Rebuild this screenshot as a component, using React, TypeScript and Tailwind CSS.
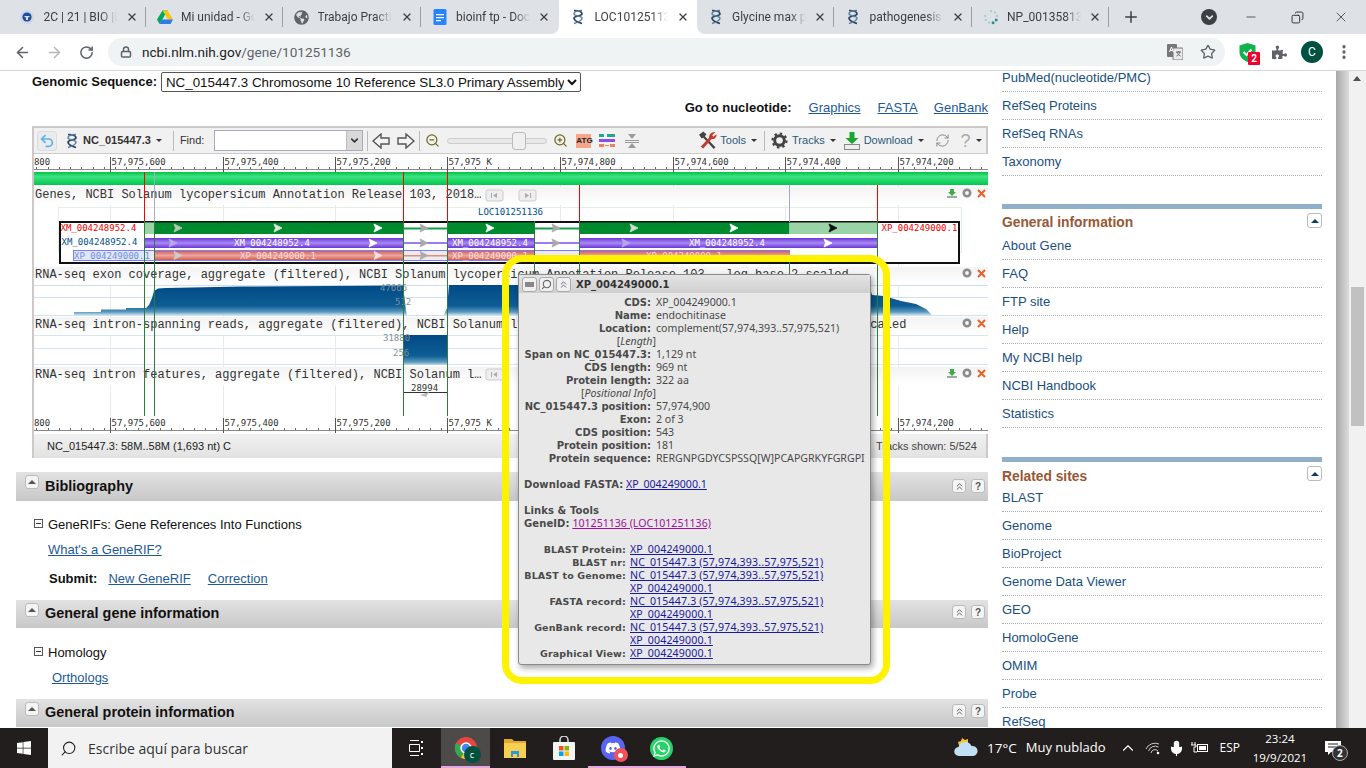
import {
  ArrowLeft,
  ArrowRight,
  ChevronDown,
  ChevronUp,
  ChevronsUp,
  Copy,
  EllipsisVertical,
  Lock,
  Mic,
  Minus,
  Plus,
  RefreshCw,
  RotateCw,
  Search,
  Star,
  Undo2,
  X,
  ZoomIn,
  ZoomOut,
} from "lucide-react";
import { FaDiscord, FaGlobeAmericas, FaPuzzlePiece, FaWhatsapp, FaWindows } from "react-icons/fa";
import type { ReactNode } from "react";

function Helix({ size = 16 }: { size?: number }) {
  return (
    <svg width={size} height={size} viewBox="0 0 16 16" fill="none" className="shrink-0">
      <path d="M4 1.5c5 0 8 1.5 8 3.5s-8 2-8 4 3 4 8 5.5" stroke="#26415c" strokeWidth="1.7" />
      <path d="M12 1.5C7 1.5 4 3 4 5s8 2 8 4-3 4-8 5.5" stroke="#5b7f9c" strokeWidth="1.4" />
    </svg>
  );
}

function DriveIcon() {
  return (
    <svg width="16" height="16" viewBox="0 0 16 16" className="shrink-0">
      <path d="M5.5 1.5h5L5 11 2.5 15 0 10.5z" fill="#00a85d" />
      <path d="M5.5 1.5h5l5.5 9h-5z" fill="#ffc107" />
      <path d="M5 10.5h11L13.5 15h-11z" fill="#2f7ae5" />
    </svg>
  );
}

function DocsIcon() {
  return (
    <svg width="16" height="16" viewBox="0 0 16 16" className="shrink-0">
      <rect x="1.5" width="13" height="16" rx="1.5" fill="#2684fc" />
      <path d="M4 5h8v1.3H4zM4 8h8v1.3H4zM4 11h5v1.3H4z" fill="#fff" />
    </svg>
  );
}

function RingIcon() {
  const dots = [0, 40, 80, 120, 160, 200, 240, 280];
  return (
    <svg width="16" height="16" viewBox="0 0 16 16" className="shrink-0">
      {dots.map((a) => (
        <circle
          key={a}
          cx={8 + 6 * Math.sin((a * Math.PI) / 180)}
          cy={8 - 6 * Math.cos((a * Math.PI) / 180)}
          r={a > 100 && a < 200 ? 1.5 : 0.9}
          fill={a > 100 && a < 200 ? "#2e8f8f" : "#79c9d4"}
        />
      ))}
    </svg>
  );
}

function UniBadge() {
  return (
    <svg width="16" height="16" viewBox="0 0 16 16" className="shrink-0">
      <circle cx="8" cy="8" r="7" fill="#cfd6ea" />
      <circle cx="8" cy="8" r="4.6" fill="#1f4e9c" />
      <path d="M5.5 7h5v1.2h-5zM7 8.2h2V11H7z" fill="#dbe4f5" />
    </svg>
  );
}

function Tab({ icon, title, active, sep = true }: { icon: ReactNode; title: string; active?: boolean; sep?: boolean }) {
  return (
    <div className={`relative flex h-[34px] w-[137.5px] shrink-0 items-center gap-[8.5px] pl-[11px] pr-[8px] ${active ? "rounded-t-[8px] bg-white" : ""}`}>
      {icon}
      <span className="flex-1 overflow-hidden whitespace-nowrap text-[12px] text-[#3c4043] [mask-image:linear-gradient(to_right,black_78%,transparent)]">
        {title}
      </span>
      <X size={12} strokeWidth={2.6} className="shrink-0 text-[#3c4043]" />
      {sep && <div className="absolute right-0 top-[7px] h-[20px] w-px bg-[#9aa0a6]" />}
    </div>
  );
}

function ChromeBar() {
  return (
    <div className="font-['Roboto',sans-serif]">
      <div className="flex h-[34px] bg-white">
        <div className="flex w-[559px] rounded-br-[8px] bg-[#dee1e6] pl-[8px]">
          <Tab icon={<UniBadge />} title="2C | 21 | BIO |BIOINF" />
          <Tab icon={<DriveIcon />} title="Mi unidad - Google Drive" />
          <Tab icon={<FaGlobeAmericas size={15} className="shrink-0 text-[#5f6368]" />} title="Trabajo Practico" />
          <Tab icon={<DocsIcon />} title="bioinf tp - Documentos" sep={false} />
        </div>
        <Tab icon={<Helix />} title="LOC101251136 endochitinase" active sep={false} />
        <div className="flex flex-1 items-center rounded-bl-[8px] bg-[#dee1e6]">
          <Tab icon={<Helix />} title="Glycine max pathogen" />
          <Tab icon={<Helix />} title="pathogenesis-related" />
          <Tab icon={<RingIcon />} title="NP_001358132.1" />
          <Plus size={18} strokeWidth={2} className="ml-[13px] text-[#3c4043]" />
          <div className="ml-[61px] flex h-[16px] w-[16px] items-center justify-center rounded-full bg-[#3c4043]">
            <ChevronDown size={11} strokeWidth={4} className="text-[#dee1e6]" />
          </div>
          <Minus size={14} strokeWidth={1.2} className="ml-[27px] text-[#202124]" />
          <Copy size={13} strokeWidth={1.6} className="ml-[33px] -scale-x-100 text-[#202124]" />
          <X size={16} strokeWidth={1.1} className="ml-[29px] text-[#202124]" />
        </div>
      </div>
      <div className="flex h-[37px] items-center border-b border-[#d3d5d8] bg-white">
        <ArrowLeft size={17} strokeWidth={2.2} className="ml-[14px] text-[#5f6368]" />
        <ArrowRight size={17} strokeWidth={2.2} className="ml-[15px] text-[#b4b7ba]" />
        <RotateCw size={15} strokeWidth={2.4} className="ml-[16px] text-[#5f6368]" />
        <div className="ml-[14px] flex h-[28px] w-[1117px] items-center rounded-full bg-[#f0f3f4]">
          <Lock size={12} strokeWidth={3} className="ml-[12px] text-[#5f6368]" />
          <span className="ml-[10px] text-[13.6px] text-[#202124]">
            ncbi.nlm.nih.gov<span className="text-[#5f6368]">/gene/101251136</span>
          </span>
          <svg width="16" height="16" viewBox="0 0 16 16" className="ml-auto">
            <rect x="0" y="0" width="10" height="13" rx="1" fill="#777" />
            <rect x="6" y="4" width="10" height="12" rx="1" fill="#e8eaed" stroke="#777" />
            <path d="M2.5 8l2-5 2 5M3.2 6.5h2.6" stroke="#fff" fill="none" />
            <path d="M9 8h5M11.5 7v1M10 8c.5 2 2 3.5 3.5 4M13 8c-.5 2-2 3.5-3.5 4" stroke="#666" fill="none" />
          </svg>
          <Star size={16} strokeWidth={2} className="ml-[17px] mr-[9px] text-[#5f6368]" />
        </div>
        <div className="relative ml-[14px]">
          <svg width="17" height="19" viewBox="0 0 17 19">
            <path d="M8.5 0l8 2.5v6.5c0 5-3.5 8-8 10-4.5-2-8-5-8-10V2.5z" fill="#10b34b" />
            <path d="M4.5 9l3 3 5-5.5" stroke="#fff" strokeWidth="2" fill="none" />
          </svg>
          <span className="absolute left-[9px] top-[9px] flex h-[13px] w-[12px] items-center justify-center rounded-[1px] bg-[#f0002c] text-[10px] font-bold text-white">
            2
          </span>
        </div>
        <FaPuzzlePiece size={15} className="ml-[16px] text-[#5f6368]" />
        <div className="ml-[14px] flex h-[22px] w-[22px] items-center justify-center rounded-full bg-[#00513f] text-[12px] text-white">C</div>
        <EllipsisVertical size={18} strokeWidth={2.4} className="ml-[12px] text-[#5f6368]" />
      </div>
    </div>
  );
}

const ticks: [number, string][] = [
  [-6, "57,975,800"],
  [109.5, "57,975,600"],
  [222.5, "57,975,400"],
  [334.5, "57,975,200"],
  [446.5, "57,975 K"],
  [559.5, "57,974,800"],
  [672.5, "57,974,600"],
  [784.5, "57,974,400"],
  [897.5, "57,974,200"],
];
const minorTicks = Array.from({ length: 86 }, (_, i) => Math.round(35.25 + i * 11.25) + 0.5);

function Ruler({ base }: { base: number }) {
  return (
    <g>
      <line x1="33" x2="987" y1={base + 0.5} y2={base + 0.5} stroke="#8a8a8a" />
      {minorTicks.map((x) => (
        <line key={x} x1={x} x2={x} y1={base - 2} y2={base} stroke="#666" />
      ))}
      {ticks.map(([x, label]) => (
        <g key={x}>
          <line x1={x} x2={x} y1={base - 12} y2={base + 3} stroke="#555" />
          <text x={x + 1} y={base - 4} className="fill-[#333] font-['DejaVu_Sans_Mono',monospace] text-[9px]">
            {label}
          </text>
        </g>
      ))}
    </g>
  );
}

function Flag({ x, y, c }: { x: number; y: number; c: string }) {
  return <polygon points={`${x - 4},${y - 4} ${x + 4},${y} ${x - 4},${y + 4} ${x - 2.5},${y}`} fill={c} stroke={c} strokeWidth="0.8" />;
}

function TrackHead({ y, text }: { y: number; text: string }) {
  return (
    <g>
      <rect x="33" y={y} width="954" height="18" fill="url(#band)" />
      <text x="34" y={y + 11} className="fill-[#333] font-['Liberation_Mono',monospace] text-[12px]">
        {text}
      </text>
    </g>
  );
}

function TrackTools({ y, dl = true }: { y: number; dl?: boolean }) {
  return (
    <g>
      {dl && (
        <g>
          <path d={`M949 ${y - 4}h4v3h2l-4 4-4-4h2z`} fill="#3fae49" />
          <rect x="946" y={y + 3} width="10" height="2" fill="#9aa" />
        </g>
      )}
      <circle cx="966" cy={y} r="3.2" fill="none" stroke="#8b8b8b" strokeWidth="2.6" />
      <path d={`M977 ${y - 3}l7 7M984 ${y - 3}l-7 7`} stroke="#e8632a" strokeWidth="2" />
    </g>
  );
}

function PageBtn({ x, y, flip }: { x: number; y: number; flip?: boolean }) {
  return (
    <g>
      <rect x={x} y={y} width="17" height="11" rx="2" fill="#eee" stroke="#ccc" />
      <path
        d={flip ? `M${x + 6} ${y + 3}l4 2.5-4 2.5zM${x + 11} ${y + 3}h1v5h-1z` : `M${x + 11} ${y + 3}l-4 2.5 4 2.5zM${x + 5} ${y + 3}h1v5h-1z`}
        fill="#aaa"
      />
    </g>
  );
}

function TrackCanvas() {
  const mono = "font-['DejaVu_Sans_Mono',monospace] text-[9px]";
  const vertical = [143.5, 153.5, 402.5, 446.5, 533.5, 578.5, 876.5];
  const redLines = [143.5, 402.5, 446.5, 578.5, 876.5];
  return (
    <svg width="954" height="280" viewBox="33 154 954 280" className="block">
      <defs>
        <linearGradient id="band" x1="0" x2="0" y1="0" y2="1">
          <stop offset="0" stopColor="#f3f3f3" />
          <stop offset="1" stopColor="#ffffff" />
        </linearGradient>
        <linearGradient id="gbar" x1="0" x2="0" y1="0" y2="1">
          <stop offset="0" stopColor="#00c244" />
          <stop offset="0.35" stopColor="#3fe283" />
          <stop offset="1" stopColor="#00c94c" />
        </linearGradient>
        <linearGradient id="purple" x1="0" x2="0" y1="0" y2="1">
          <stop offset="0" stopColor="#6a35d8" />
          <stop offset="0.5" stopColor="#a98af5" />
          <stop offset="1" stopColor="#6a35d8" />
        </linearGradient>
        <linearGradient id="salmon" x1="0" x2="0" y1="0" y2="1">
          <stop offset="0" stopColor="#d45f56" />
          <stop offset="0.5" stopColor="#eaa79f" />
          <stop offset="1" stopColor="#d45f56" />
        </linearGradient>
        <linearGradient id="cov" x1="0" x2="0" y1="0" y2="1">
          <stop offset="0" stopColor="#004a85" />
          <stop offset="0.7" stopColor="#0f5d95" />
          <stop offset="0.9" stopColor="#5a9ac0" />
          <stop offset="1" stopColor="#c4dcea" />
        </linearGradient>
        <linearGradient id="covA" gradientUnits="userSpaceOnUse" x1="0" x2="0" y1="285" y2="315">
          <stop offset="0" stopColor="#004a85" />
          <stop offset="0.7" stopColor="#0f5d95" />
          <stop offset="0.9" stopColor="#5a9ac0" />
          <stop offset="1" stopColor="#c4dcea" />
        </linearGradient>
      </defs>
      <rect x="33" y="154" width="954" height="280" fill="#fff" />
      {ticks.slice(1).map(([x]) => (
        <line key={x} x1={x} x2={x} y1="185" y2="418" stroke="#e6ecef" />
      ))}
      <Ruler base={169} />
      <rect x="33" y="172" width="954" height="13" fill="url(#gbar)" />

      <TrackHead y={187} text="Genes, NCBI Solanum lycopersicum Annotation Release 103, 2018…" />
      <PageBtn x={485} y={190} />
      <PageBtn x={518} y={190} flip />
      <TrackTools y={193} />
      <rect x="57.5" y="207.5" width="903" height="45" fill="none" stroke="#e3f0e3" />
      <text x="477" y="215" className={`${mono} fill-[#00508f]`}>
        LOC101251136
      </text>

      <rect x="59" y="222" width="899" height="41" fill="#fff" stroke="#111" strokeWidth="2" />
      <text x="59.5" y="231" className={`${mono} fill-[#f00000]`}>XM_004248952.4</text>
      <text x="60.5" y="245" className={`${mono} fill-[#00508f]`}>XM_004248952.4</text>
      <rect x="72.5" y="250.5" width="716" height="10" fill="#fff" stroke="#7b7bff" />
      <rect x="73" y="251" width="77" height="9" fill="#e0e6ff" />
      <text x="73" y="258.5" className={`${mono} fill-[#6f8fd0]`}>XP_004249000.1</text>
      <text x="880.5" y="231" className={`${mono} fill-[#f00000]`}>XP_004249000.1</text>

      {/* mRNA row */}
      <rect x="143" y="222.5" width="10" height="11.5" fill="#9ad3a5" />
      <rect x="153" y="222.5" width="249" height="11.5" fill="#008a2e" />
      <rect x="402" y="227.5" width="44" height="2" fill="#12a04a" />
      <rect x="446" y="222.5" width="87" height="11.5" fill="#008a2e" />
      <rect x="533" y="227.5" width="45" height="2" fill="#12a04a" />
      <rect x="578" y="222.5" width="210.5" height="11.5" fill="#008a2e" />
      <rect x="788.5" y="222.5" width="88" height="11.5" fill="#9ad3a5" />
      {/* transcript row */}
      <rect x="143" y="238" width="259" height="10" fill="url(#purple)" />
      <rect x="402" y="242" width="44" height="2" fill="#9a7bf0" />
      <rect x="446" y="238" width="87" height="10" fill="url(#purple)" />
      <rect x="533" y="242" width="45" height="2" fill="#9a7bf0" />
      <rect x="578" y="238" width="298.5" height="10" fill="url(#purple)" />
      {/* protein row */}
      <rect x="150" y="251" width="3" height="9" fill="#ececec" />
      <rect x="153" y="251" width="249" height="9" fill="url(#salmon)" />
      <rect x="402" y="251" width="44" height="9" fill="#ececec" />
      <rect x="402" y="255" width="44" height="1.5" fill="#e58a82" />
      <rect x="446" y="251" width="87" height="9" fill="url(#salmon)" />
      <rect x="533" y="251" width="45" height="9" fill="#ececec" />
      <rect x="578" y="251" width="210.5" height="9" fill="url(#salmon)" />

      {[
        [177, 228, "#b5c9b5"],
        [277, 228, "#d8e8d8"],
        [377, 228, "#fff"],
        [423, 228, "#aaa"],
        [489, 228, "#fff"],
        [555, 228, "#aaa"],
        [633, 228, "#d0dfd0"],
        [733, 228, "#fff"],
        [832, 228, "#111"],
        [172, 243, "#b9a7ee"],
        [372, 243, "#fff"],
        [423, 243, "#aaa"],
        [555, 243, "#aaa"],
        [625, 243, "#b9a7ee"],
        [827, 243, "#fff"],
        [177, 255.5, "#ccc"],
        [377, 255.5, "#f5e0dd"],
        [423, 255.5, "#aaa"],
      ].map(([x, y, c]) => (
        <Flag key={`${x}-${y}`} x={x as number} y={y as number} c={c as string} />
      ))}
      <text x="233" y="246" className={`${mono} fill-white`}>XM_004248952.4</text>
      <text x="451" y="246" className={`${mono} fill-white`}>XM_004248952.4</text>
      <text x="688" y="246" className={`${mono} fill-white`}>XM_004248952.4</text>
      <text x="239" y="258.5" className={`${mono} fill-[#f8dcd8]`}>XP_004249000.1</text>
      <text x="451" y="258.5" className={`${mono} fill-[#f8dcd8]`}>XP_004249000.1</text>
      <text x="645" y="258.5" className={`${mono} fill-[#f8dcd8]`}>XP_004249000.1</text>

      <TrackHead y={267} text="RNA-seq exon coverage, aggregate (filtered), NCBI Solanum lycopersicum Annotation Release 103 - log base 2 scaled" />
      <TrackTools y={273} dl={false} />
      {[285.5, 297.5, 315.5].map((y) => (
        <line key={y} x1="33" x2="987" y1={y} y2={y} stroke="#cfe0ee" />
      ))}
      <path
        d="M73 315V312H100V309.5H125V308H145L148 305L151 298L153 291L157 288.5L165 288L240 286.5L402 285.5L405 311L406 315H443L446 308L448 285H533V315H578V285H868L871 295L883 296L900 301L915 304L925 309L931 315Z"
        fill="url(#covA)"
      />
      <text x="379" y="291" className={`${mono} fill-[#7f8f9c]`}>47665</text>
      <text x="394" y="305" className={`${mono} fill-[#7f8f9c]`}>512</text>

      <TrackHead y={317} text="RNA-seq intron-spanning reads, aggregate (filtered), NCBI Solanum lycopersicum Annotation Release 103 - log base 2 scaled" />
      <TrackTools y={323} dl={false} />
      {[335.5, 348.5, 364.5].map((y) => (
        <line key={y} x1="33" x2="987" y1={y} y2={y} stroke="#d8e6f0" />
      ))}
      <rect x="402" y="335" width="44" height="30" fill="url(#cov)" />
      <text x="382" y="341" className={`${mono} fill-[#7f8f9c]`}>31880</text>
      <text x="392" y="356" className={`${mono} fill-[#7f8f9c]`}>256</text>

      <TrackHead y={367} text="RNA-seq intron features, aggregate (filtered), NCBI Solanum l…" />
      <PageBtn x={485} y={369} />
      <TrackTools y={373} />
      <text x="410" y="391" className={`${mono} fill-[#333]`}>28994</text>
      <path d="M402 392.5H446" stroke="#333" />
      <path d="M419 395l9-3-3 5z" fill="#bbb" />

      {redLines.map((x) => (
        <line key={x} x1={x} x2={x} y1={x < 500 ? 172 : 185} y2="221" stroke="#ff0000" />
      ))}
      <path d="M153.5 172V221M788.5 185V222" stroke="#aaa6cc" />
      {vertical.map((x) => (
        <line key={x} x1={x} x2={x} y1="221" y2="416" stroke="#2f7d3a" />
      ))}
      <line x1="788.5" x2="788.5" y1="260" y2="416" stroke="#2f7d3a" />
      <Ruler base={430} />
    </svg>
  );
}

function Caret() {
  return <span className="ml-[5px] h-0 w-0 border-x-[3px] border-t-[3px] border-x-transparent border-t-[#333]" />;
}

function ToolSep({ ml }: { ml: string }) {
  return <div className={`h-[20px] w-px bg-[#bbb] ${ml}`} />;
}

function OutlineArrow({ flip }: { flip?: boolean }) {
  return (
    <svg width="18" height="16" viewBox="0 0 18 16" className={flip ? "-scale-x-100" : ""}>
      <path d="M1 8l8-7v4h8v6H9v4z" fill="#f4f4f4" stroke="#555" strokeWidth="1.4" />
    </svg>
  );
}

function ViewerToolbar() {
  return (
    <div className="flex h-[26px] items-center border-b border-[#ccc] bg-[#f1f1f1] font-['Liberation_Sans',sans-serif] text-[11px]">
      <div className="ml-[3px] flex h-[20px] w-[20px] items-center justify-center rounded-[3px] border border-[#ddd] bg-[#ebebeb]">
        <Undo2 size={16} strokeWidth={2.6} className="text-[#58b2ec]" />
      </div>
      <div className="ml-[7px]">
        <Helix />
      </div>
      <span className="ml-[3px] font-bold text-[#333]">NC_015447.3</span>
      <Caret />
      <ToolSep ml="ml-[11px]" />
      <span className="ml-[6px] text-[#333]">Find:</span>
      <div className="ml-[10px] flex h-[21px] w-[149px] border border-[#aab] bg-white">
        <div className="flex-1" />
        <div className="flex w-[16px] items-center justify-center border-l border-[#bbb] bg-[#d8d8d8]">
          <ChevronDown size={11} strokeWidth={3.5} className="text-[#333]" />
        </div>
      </div>
      <ToolSep ml="ml-[4px]" />
      <div className="ml-[4px]">
        <OutlineArrow />
      </div>
      <div className="ml-[7px]">
        <OutlineArrow flip />
      </div>
      <ToolSep ml="ml-[4px]" />
      <ZoomOut size={15} strokeWidth={2} className="ml-[5px] text-[#6d6a20]" />
      <div className="relative ml-[7px] h-[6px] w-[100px] rounded-full border border-[#ccc] bg-[#e8e8e8]">
        <div className="absolute left-[64px] top-[-7px] h-[18px] w-[14px] rounded-[3px] border border-[#bbb] bg-[#f0f0f0]" />
      </div>
      <ZoomIn size={15} strokeWidth={2} className="ml-[6px] text-[#6d6a20]" />
      <span className="ml-[8px] w-[15px] bg-[#f4a58a] text-center text-[8px] font-bold leading-[14px] text-[#222]">ATG</span>
      <svg width="18" height="14" viewBox="0 0 18 14" className="ml-[7px]">
        <path d="M1 0h5v3H1zM9 0h8v3H9z" fill="#23a78c" />
        <path d="M1 5h16v3H1z" fill="#8a4fe8" />
        <path d="M1 10h5v3H1zM7 11h4v1H7zM12 10h5v3h-5z" fill="#f2805f" />
      </svg>
      <svg width="14" height="16" viewBox="0 0 14 16" className="ml-[9px]">
        <path d="M0 7.5h14M0 9.5h14" stroke="#999" />
        <path d="M3 1h8L7 6zM3 15h8L7 10z" fill="#9a9a9a" />
      </svg>

      <svg width="19" height="19" viewBox="0 0 18 18" className="ml-[59px]">
        <path d="M1 3.5L5 .5l3 2.5-1.5 2L16.500 15.500 15 17 5 6.500 3.500 7z" fill="#444" />
        <path d="M16.500 1l-3 3 1 1.500 3-2.500c.5 2.500-1.500 5-4.500 4.500L5 16.500 2.500 15l8-8.500C10 3.500 13 .5 16.500 1z" fill="#c63a2e" />
      </svg>
      <span className="ml-[3px] text-[#2c5a78]">Tools</span>
      <Caret />
      <ToolSep ml="ml-[7px]" />
      <svg width="17" height="17" viewBox="0 0 17 17" className="ml-[6px]">
        <circle cx="8.5" cy="8.5" r="4.8" fill="none" stroke="#444" strokeWidth="3" />
        <circle cx="8.5" cy="8.5" r="7" fill="none" stroke="#444" strokeWidth="2.2" strokeDasharray="2.5 3" />
      </svg>
      <span className="ml-[4px] text-[#2c5a78]">Tracks</span>
      <Caret />
      <svg width="16" height="18" viewBox="0 0 16 18" className="ml-[8px]">
        <path d="M5.5 0h5v6h4L8 12 1.5 6h4z" fill="#18a62c" />
        <rect x="0.5" y="12.5" width="15" height="5" fill="#eee" stroke="#888" />
      </svg>
      <span className="ml-[4px] text-[#2c5a78]">Download</span>
      <Caret />
      <RefreshCw size={15} strokeWidth={1.6} className="ml-[11px] text-[#888]" />
      <span className="ml-[11px] text-[18px] leading-none text-[#aaa]">?</span>
      <Caret />
    </div>
  );
}

function GenomeViewer() {
  return (
    <div className="ml-[16px] h-[332px] w-[956px] border-2 border-[#cdc9c9] bg-white">
      <ViewerToolbar />
      <TrackCanvas />
      <div className="flex h-[24px] items-center justify-between bg-gradient-to-b from-[#f1f1f1] to-[#e2e2e2] pl-[13px] pr-[9px] text-[11px] text-[#222]">
        <span>NC_015447.3: 58M..58M (1,693 nt) C</span>
        <span className="text-[#444]">Tracks shown: 5/524</span>
      </div>
    </div>
  );
}

function SmallBtn({ children }: { children: ReactNode }) {
  return (
    <div className="flex h-[14px] w-[14px] shrink-0 items-center justify-center rounded-[3px] border border-[#bbb] bg-[#f4f4f4] text-[10px] font-bold text-[#555]">
      {children}
    </div>
  );
}

function UpTriangle({ c = "#555" }: { c?: string }) {
  return <span className="h-0 w-0 border-x-[4px] border-b-[4px] border-x-transparent" style={{ borderBottomColor: c }} />;
}

function SectionBar({ title, h, titleTop, toolsTop }: { title: string; h: string; titleTop: string; toolsTop: string }) {
  return (
    <div className={`flex items-start bg-gradient-to-b from-[#e2e2e2] to-[#c8c8c8] pl-[9px] pt-[3px] ${h}`}>
      <SmallBtn>
        <UpTriangle />
      </SmallBtn>
      <h2 className={`ml-[6px] text-[14.4px] font-bold leading-[18px] text-[#111] ${titleTop}`}>{title}</h2>
      <div className={`ml-auto mr-[3px] flex gap-[5px] ${toolsTop}`}>
        <SmallBtn>
          <ChevronsUp size={11} strokeWidth={2} />
        </SmallBtn>
        <SmallBtn>?</SmallBtn>
      </div>
    </div>
  );
}

function Tree({ children }: { children: ReactNode }) {
  return (
    <div className="flex items-center pl-[18px] leading-[16px] text-[#111]">
      <span className="relative mr-[5px] h-[9px] w-[9px] -translate-y-[2px] border border-[#555]">
        <span className="absolute left-[1px] top-[3px] h-px w-[5px] bg-[#333]" />
      </span>
      {children}
    </div>
  );
}

function PageLink({ children, className = "" }: { children: ReactNode; className?: string }) {
  return <a className={`text-[#1d5a96] underline ${className}`}>{children}</a>;
}

function LeftColumn() {
  return (
    <div className="ml-[16px] w-[972px] shrink-0 text-[13px]">
      <div className="ml-[16px] mt-[1px] flex h-[20px] items-center">
        <span className="font-bold text-[#111]">Genomic Sequence:</span>
        <select
          defaultValue="a"
          className="ml-[4px] h-[20px] w-[420px] rounded-[2px] border border-[#555] bg-white text-[13.33px] text-[#111]"
        >
          <option value="a">NC_015447.3 Chromosome 10 Reference SL3.0 Primary Assembly</option>
        </select>
      </div>
      <div className="mt-[7px] flex h-[18px] items-center justify-end">
        <span className="font-bold text-[#111]">Go to nucleotide:</span>
        <PageLink className="ml-[17px]">Graphics</PageLink>
        <PageLink className="ml-[17px]">FASTA</PageLink>
        <PageLink className="ml-[16px]">GenBank</PageLink>
      </div>
      <div className="mt-[9px]">
        <GenomeViewer />
      </div>
      <div className="mt-[14px]">
        <SectionBar title="Bibliography" h="h-[29px]" titleTop="mt-[2px]" toolsTop="mt-[4px]" />
      </div>
      <div className="h-[99px] pt-[16px]">
        <Tree>GeneRIFs: Gene References Into Functions</Tree>
        <div className="mt-[9px] pl-[32px] leading-[16px]">
          <PageLink>What's a GeneRIF?</PageLink>
        </div>
        <div className="mt-[13px] flex pl-[33px] leading-[16px]">
          <span className="font-bold text-[#111]">Submit:</span>
          <PageLink className="ml-[11px]">New GeneRIF</PageLink>
          <PageLink className="ml-[17px]">Correction</PageLink>
        </div>
      </div>
      <SectionBar title="General gene information" h="h-[28px]" titleTop="mt-[1px]" toolsTop="mt-[2px]" />
      <div className="h-[71px] pt-[17px]">
        <Tree>Homology</Tree>
        <div className="mt-[9px] pl-[36px] leading-[16px]">
          <PageLink>Orthologs</PageLink>
        </div>
      </div>
      <SectionBar title="General protein information" h="h-[28px]" titleTop="mt-[1px]" toolsTop="mt-[2px]" />
    </div>
  );
}

function SideRow({ label }: { label: string }) {
  return <li className="flex h-[28px] items-center border-b border-dotted border-[#aaa] pt-[1px] text-[#1a4f80]">{label}</li>;
}

function SideGroup({ title, items, head, headTop }: { title: string; items: string[]; head: string; headTop: string }) {
  return (
    <div>
      <div className="h-[5px] bg-[#8fb0c8]" />
      <div className={`flex items-start justify-between ${head}`}>
        <h3 className={`text-[13.8px] font-bold leading-[18px] text-[#985735] ${headTop}`}>{title}</h3>
        <div className="mt-[4px] flex h-[15px] w-[15px] items-center justify-center rounded-[3px] border border-[#bbb]">
          <UpTriangle c="#123a66" />
        </div>
      </div>
      <ul>
        {items.map((it) => (
          <SideRow key={it} label={it} />
        ))}
      </ul>
    </div>
  );
}

function Sidebar() {
  return (
    <div className="ml-[14px] w-[320px] shrink-0 text-[13px]">
      <ul className="mt-[-7px]">
        {["PubMed(nucleotide/PMC)", "RefSeq Proteins", "RefSeq RNAs", "Taxonomy"].map((it) => (
          <SideRow key={it} label={it} />
        ))}
      </ul>
      <div className="mt-[28px]">
        <SideGroup
          title="General information"
          head="h-[23px]"
          headTop="mt-[5px]"
          items={["About Gene", "FAQ", "FTP site", "Help", "My NCBI help", "NCBI Handbook", "Statistics"]}
        />
      </div>
      <div className="mt-[29px]">
        <SideGroup
          title="Related sites"
          head="h-[22px]"
          headTop="mt-[6px]"
          items={["BLAST", "Genome", "BioProject", "Genome Data Viewer", "GEO", "HomoloGene", "OMIM", "Probe", "RefSeq"]}
        />
      </div>
    </div>
  );
}

const boldLabel = "text-right font-['DejaVu_Sans',sans-serif] text-[10px] font-bold";
const boldLink = "text-right font-['DejaVu_Sans',sans-serif] text-[9.5px] font-bold";
const boldInline = "font-['DejaVu_Sans',sans-serif] text-[10px] font-bold tracking-[0.1px]";

function PopRow({ label, value }: { label: string; value: string }) {
  return (
    <>
      <b className={boldLabel}>{label}</b>
      <span>{value}</span>
    </>
  );
}

function PopLink({ label, value }: { label: string; value: string }) {
  return (
    <>
      <b className={boldLink}>{label}</b>
      <a className="text-[#1a1a9c] underline">{value}</a>
    </>
  );
}

const nc = "NC_015447.3 (57,974,393..57,975,521)";
const xp = "XP_004249000.1";

function FeaturePopup() {
  return (
    <div className="absolute left-[518px] top-[274px] h-[391px] w-[353px] rounded-[3px] border border-[#8a8a8a] bg-[#e8e8e8] font-['Noto_Sans',sans-serif] text-[10.6px] leading-[13px] text-[#4a4a4a] shadow-[2px_3px_6px_rgba(0,0,0,0.35)]">
      <div className="flex h-[18px] items-center gap-[2px] bg-gradient-to-b from-[#e4e4e4] to-[#cfcfcf] pl-[3px]">
        <div className="flex h-[15px] w-[15px] items-center justify-center rounded-[3px] border border-[#aaa] bg-[#f0f0f0]">
          <span className="h-[5px] w-[9px] bg-[#888]" />
        </div>
        <div className="flex h-[15px] w-[15px] items-center justify-center rounded-[3px] border border-[#aaa] bg-[#f0f0f0]">
          <Search size={11} strokeWidth={2.4} className="-scale-x-100 text-[#666]" />
        </div>
        <div className="flex h-[15px] w-[15px] items-center justify-center rounded-[3px] border border-[#aaa] bg-[#f0f0f0]">
          <ChevronsUp size={11} strokeWidth={2} className="text-[#666]" />
        </div>
        <span className="ml-[3px] font-['DejaVu_Sans',sans-serif] text-[10px] font-bold text-[#333]">XP_004249000.1</span>
      </div>
      <div className="grid grid-cols-[127px_1fr] gap-x-[5px] pl-[5px] pt-[3px]">
        <PopRow label="CDS:" value={xp} />
        <PopRow label="Name:" value="endochitinase" />
        <PopRow label="Location:" value="complement(57,974,393..57,975,521)" />
        <div className="col-span-2 w-[132px] text-right">
          [<i>Length</i>]
        </div>
        <PopRow label="Span on NC_015447.3:" value="1,129 nt" />
        <PopRow label="CDS length:" value="969 nt" />
        <PopRow label="Protein length:" value="322 aa" />
        <div className="col-span-2 w-[132px] text-right">
          [<i>Positional Info</i>]
        </div>
        <PopRow label="NC_015447.3 position:" value="57,974,900" />
        <PopRow label="Exon:" value="2 of 3" />
        <PopRow label="CDS position:" value="543" />
        <PopRow label="Protein position:" value="181" />
        <PopRow label="Protein sequence:" value="RERGNPGDYCSPSSQ[W]PCAPGRKYFGRGPI" />
      </div>
      <div className="mt-[13px] pl-[5px]">
        <b className={boldInline}>Download FASTA:</b> <a className="text-[#1a1a9c] underline">{xp}</a>
      </div>
      <div className="mt-[13px] pl-[5px]">
        <b className={`block ${boldInline}`}>Links &amp; Tools</b>
        <b className={boldInline}>GeneID:</b> <a className="text-[#a0109a] underline">101251136 (LOC101251136)</a>
      </div>
      <div className="mt-[13px] grid grid-cols-[102px_1fr] gap-x-[4px] pl-[5px] tracking-[0.15px]">
        <PopLink label="BLAST Protein:" value={xp} />
        <PopLink label="BLAST nr:" value={nc} />
        <PopLink label="BLAST to Genome:" value={nc} />
        <PopLink label="" value={xp} />
        <PopLink label="FASTA record:" value={nc} />
        <PopLink label="" value={xp} />
        <PopLink label="GenBank record:" value={nc} />
        <PopLink label="" value={xp} />
        <PopLink label="Graphical View:" value={xp} />
      </div>
    </div>
  );
}

function TaskSlot({ children, active, under }: { children: ReactNode; active?: boolean; under?: boolean }) {
  return (
    <div className={`relative flex h-[40px] w-[49px] items-center justify-center ${active ? "bg-[#4d4a4a]" : ""}`}>
      {children}
      {under && <div className="absolute bottom-0 left-0 h-[2px] w-full bg-[#e3a6dd]" />}
    </div>
  );
}

function Taskbar() {
  return (
    <div className="flex h-[40px] items-center bg-[#221e1e] font-['Open_Sans',sans-serif] text-white">
      <div className="flex w-[48px] justify-center">
        <FaWindows size={16} />
      </div>
      <div className="flex h-[40px] w-[344px] items-center bg-[#f2f2f2] text-[14px] text-[#333]">
        <Search size={17} strokeWidth={1.5} className="ml-[12px] -scale-x-100 text-[#222]" />
        <span className="ml-[11px]">Escribe aquí para buscar</span>
      </div>
      <TaskSlot>
        <svg width="16" height="16" viewBox="0 0 16 16" fill="none" stroke="#fff">
          <path d="M1 .5h9M1 15.5h9M.5 4.5h10v7H.5z" />
          <path d="M13 1v2M13 7v2M13 13v2" strokeWidth="2" />
        </svg>
      </TaskSlot>
      <TaskSlot active under>
        <div className="relative">
          <svg width="24" height="24" viewBox="0 0 24 24">
            <circle cx="12" cy="12" r="11" fill="#e8453c" />
            <path d="M12 12L23 12A11 11 0 0 1 7 21.8z" fill="#fbc02d" />
            <path d="M12 12L7 21.8A11 11 0 0 1 2 7z" fill="#34a853" />
            <circle cx="12" cy="12" r="5" fill="#4285f4" stroke="#fff" strokeWidth="1.5" />
          </svg>
          <span className="absolute left-[10px] top-[10px] flex h-[17px] w-[17px] items-center justify-center rounded-full bg-[#00513f] text-[9px]">c</span>
        </div>
      </TaskSlot>
      <TaskSlot>
        <svg width="22" height="20" viewBox="0 0 22 20">
          <path d="M0 1h8l2 2h12v3H0z" fill="#e2a92a" />
          <rect y="5" width="22" height="15" fill="#f6cf55" />
          <path d="M7 19v-6h8v6h-2v-3H9v3z" fill="#2b97d9" />
        </svg>
      </TaskSlot>
      <TaskSlot>
        <svg width="22" height="24" viewBox="0 0 22 24">
          <path d="M7 7V4a4 4 0 0 1 8 0v3" fill="none" stroke="#ddd" strokeWidth="1.5" />
          <rect y="6" width="22" height="18" rx="1" fill="#f4f4f4" />
          <rect x="6" y="10" width="4.5" height="4.5" fill="#f25022" />
          <rect x="11.5" y="10" width="4.5" height="4.5" fill="#7fba00" />
          <rect x="6" y="15.5" width="4.5" height="4.5" fill="#00a4ef" />
          <rect x="11.5" y="15.5" width="4.5" height="4.5" fill="#ffb900" />
        </svg>
      </TaskSlot>
      <TaskSlot under>
        <div className="relative flex h-[24px] w-[24px] items-center justify-center rounded-full bg-[#5865f2]">
          <FaDiscord size={16} />
          <span className="absolute left-[13px] top-[12px] flex h-[14px] w-[14px] items-center justify-center rounded-full bg-[#f0525a]">
            <span className="h-[5px] w-[5px] rounded-full bg-white" />
          </span>
        </div>
      </TaskSlot>
      <TaskSlot under>
        <div className="flex h-[23px] w-[23px] items-center justify-center rounded-full bg-[#25d366]">
          <FaWhatsapp size={19} />
        </div>
      </TaskSlot>
      <svg width="28" height="22" viewBox="0 0 28 22" className="ml-[266px]">
        <path d="M6 5l3-1 1-3 3 2 3-1v4l-8 6z" fill="#f7c52e" />
        <path d="M7 19a4.5 4.5 0 0 1-.5-9 7 7 0 0 1 13-1 5 5 0 0 1 2 10z" fill="#bfe0f5" />
      </svg>
      <span className="ml-[7px] text-[13.5px]">17°C</span>
      <span className="ml-[9px] text-[13px]">Muy nublado</span>
      <ChevronUp size={18} strokeWidth={1.5} className="ml-[14px]" />
      <svg width="16" height="14" viewBox="0 0 16 14" fill="none" stroke="#ccc" className="ml-[8px]">
        <path d="M1 8a10 10 0 0 1 13-5M3.5 10a7 7 0 0 1 10-4M6 12a4 4 0 0 1 7-2" />
        <circle cx="13" cy="12" r="1.3" fill="#fff" stroke="none" />
      </svg>
      <Mic size={17} strokeWidth={1.6} className="ml-[7px]" fill="#fff" />
      <svg width="18" height="14" viewBox="0 0 18 14" className="ml-[6px]" fill="none" stroke="#fff">
        <path d="M1 1v3M4 1v3M0 4h5v2H3v5h3" />
        <rect x="6.5" y="3.5" width="10" height="7" />
        <rect x="8" y="5" width="7" height="4" fill="#fff" stroke="none" />
      </svg>
      <span className="ml-[10px] text-[12px]">ESP</span>
      <div className="ml-[5px] flex w-[70px] flex-col items-center text-[11.5px] leading-[19px]">
        <span>23:24</span>
        <span>19/9/2021</span>
      </div>
      <div className="relative ml-[10px]">
        <svg width="16" height="14" viewBox="0 0 16 14">
          <path d="M0 0h16v11H6l-3 3v-3H0z" fill="#fff" />
          <path d="M3 3h10M3 6h10" stroke="#221e1e" />
        </svg>
        <span className="absolute left-[7px] top-[4px] flex h-[16px] w-[16px] items-center justify-center rounded-full border border-[#aaa] bg-[#333] text-[10px] font-bold">2</span>
      </div>
    </div>
  );
}

export default function App() {
  return (
    <div className="relative h-[768px] w-[1366px] overflow-hidden bg-white font-['Liberation_Sans',Arial,sans-serif]">
      <ChromeBar />
      <main className="flex h-[657px] overflow-hidden">
        <LeftColumn />
        <Sidebar />
        <div className="ml-[14px] w-[13px] shrink-0 bg-gradient-to-r from-[#a8a8a8] to-[#dcdcdc]" />
        <div className="relative w-[17px] shrink-0 bg-[#f1f1f1]">
          <span className="absolute left-[4px] top-[5px] h-0 w-0 border-x-[4px] border-b-[5px] border-x-transparent border-b-[#505050]" />
          <div className="absolute left-[2px] top-[216px] h-[139px] w-[13px] bg-[#c1c1c1]" />
        </div>
      </main>
      <Taskbar />
      <FeaturePopup />
      <div className="pointer-events-none absolute left-[502px] top-[255px] h-[429px] w-[388px] rounded-[20px] border-[7px] border-[#fff200]" />
    </div>
  );
}
